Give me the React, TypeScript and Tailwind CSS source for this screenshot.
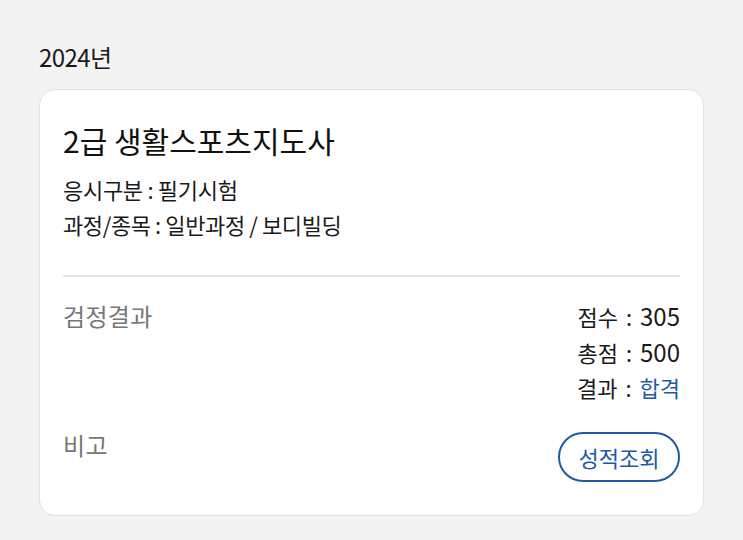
import React from "react";

export default function App() {
  const font = { fontFamily: '"Noto Sans CJK KR", "Noto Sans", sans-serif' };
  return (
    <div className="h-[540px] w-[743px] overflow-hidden bg-[#f3f3f3] pl-[39px] pr-[39px] pt-[39px]" style={font}>
      <div className="text-[24px] leading-[36px] tracking-[-0.6px] text-[#1a1a1a]">2024년</div>
      <div className="mt-[14px] rounded-[16px] border border-[#e2e2e2] bg-white px-[23px] pt-[30px] pb-[33px]">
        <div className="text-[30px] leading-[40px] text-[#111]">2급 생활스포츠지도사</div>
        <div className="mt-[12px] text-[22px] leading-[35px] tracking-[-0.3px] text-[#1a1a1a]">응시구분 : 필기시험</div>
        <div className="text-[22px] leading-[35px] tracking-[-0.4px] text-[#1a1a1a]">과정/종목 : 일반과정 / 보디빌딩</div>
        <div className="mt-[33px] h-[2px] bg-[#e6e6e6]" />
        <div className="mt-[21px] flex items-start justify-between text-[22px] leading-[35px]">
          <div className="text-[24px] tracking-[0.3px] text-[#777]">검정결과</div>
          <div className="flex flex-col items-end text-[#1a1a1a] [word-spacing:3px]">
            <div>
              점수 : <span className="text-[24px]">305</span>
            </div>
            <div>
              총점 : <span className="text-[24px]">500</span>
            </div>
            <div>
              결과 : <span className="text-[#1f5aa6]">합격</span>
            </div>
          </div>
        </div>
        <div className="mt-[22px] flex items-start justify-between text-[22px] leading-[35px]">
          <div className="text-[24px] tracking-[0.3px] text-[#777]">비고</div>
          <button className="mt-[5px] flex h-[50px] w-[122px] items-center justify-center rounded-full border-2 border-[#1f5aa6] text-[22px] text-[#1f5aa6]">
            성적조회
          </button>
        </div>
      </div>
    </div>
  );
}
